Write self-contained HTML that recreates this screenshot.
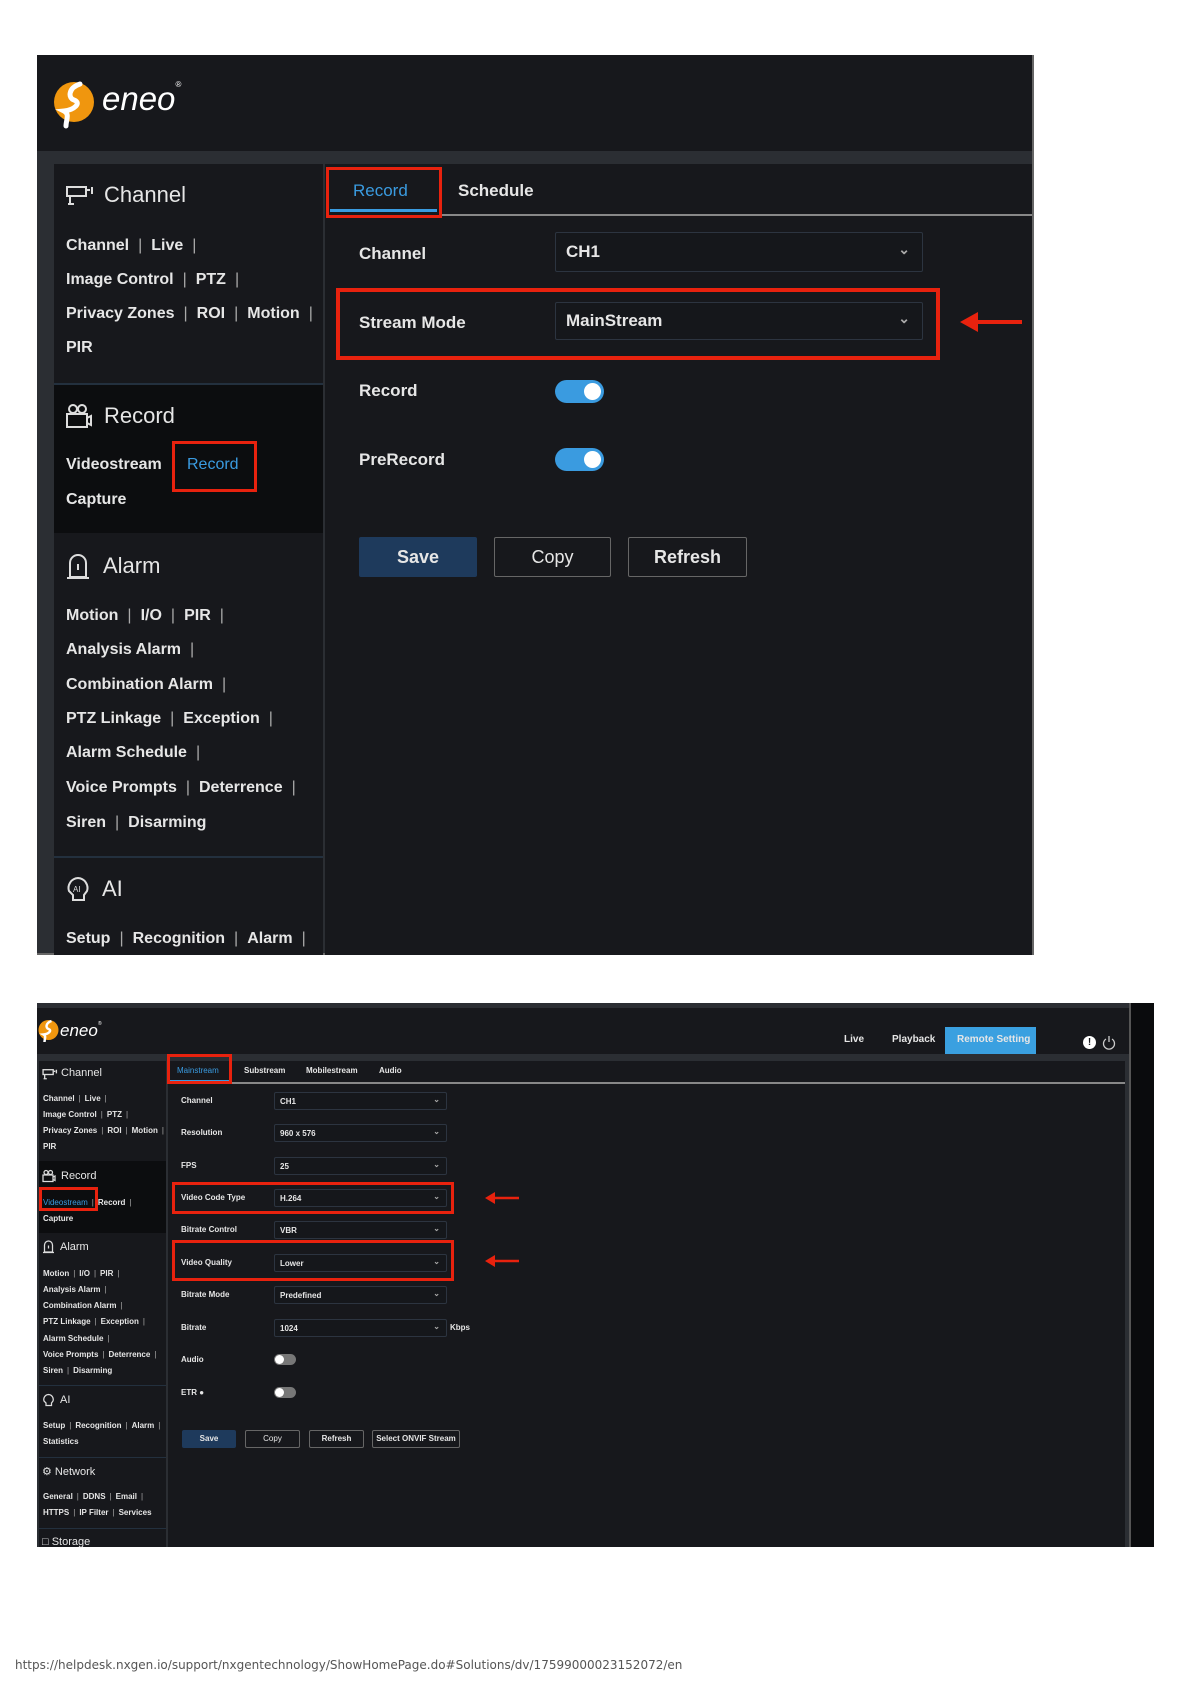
<!DOCTYPE html>
<html><head><meta charset="utf-8"><style>
*{margin:0;padding:0;box-sizing:border-box}
body{width:1192px;height:1684px;background:#fff;position:relative;font-family:"Liberation Sans",sans-serif;overflow:hidden}
.a{position:absolute}
.t{position:absolute;color:#e6e6e6;white-space:nowrap;font-weight:bold}
.sep{color:#aaa;font-weight:normal;margin:0 9px}
.s2 .sep{margin:0 4px}
.red{position:absolute;border:3px solid #e8220e}
.sel{position:absolute;border:1px solid #2c3440;background:#15171b;border-radius:2px;color:#e6e6e6;font-weight:bold}
.btn{position:absolute;border:1px solid #666;color:#e6e6e6;text-align:center;font-weight:bold;border-radius:2px}
</style></head><body>

<!-- PANEL 1 -->
<div class="a" style="left:37px;top:55px;width:997px;height:900px;background:#2b2e33;border-right:2px solid #666;border-bottom:2px solid #666"></div>
<div class="a" style="left:37px;top:55px;width:995px;height:96px;background:#17181c"></div>
<svg class="a" style="left:52px;top:78px" width="46" height="52" viewBox="0 0 46 52"><circle cx="22" cy="24" r="20" fill="#f0960e"/><path d="M28 6 C16 10 16 20 22 22 C30 25 22 32 12 33 C18 36 14 42 14 48" stroke="#fff" stroke-width="5" fill="none" stroke-linecap="round"/></svg>
<div class="a" style="left:102px;top:80px;font:italic 33px 'Liberation Sans',sans-serif;color:#fff;letter-spacing:0px">eneo<span style="font-size:8px;vertical-align:top">®</span></div>
<div class="a" style="left:54px;top:164px;width:269px;height:791px;background:#17181c"></div>
<div class="a" style="left:54px;top:383px;width:269px;height:2px;background:#23303e"></div>
<div class="a" style="left:54px;top:385px;width:269px;height:148px;background:#0c0d0f"></div>
<div class="a" style="left:54px;top:856px;width:269px;height:2px;background:#23303e"></div>
<div class="a" style="left:325px;top:164px;width:707px;height:791px;background:#17181c"></div>

<svg class="a" style="left:65px;top:184px" width="30" height="24" viewBox="0 0 30 24" fill="none" stroke="#ddd" stroke-width="2"><rect x="2" y="3" width="19" height="9"/><path d="M5 12v8M3 20h6M22 6h3M27 3v7"/></svg>
<div class="t" style="left:104px;top:182px;font-size:22px;font-weight:normal">Channel</div>
<div class="t" style="left:66px;top:237px;font-size:16px">Channel<span class="sep">|</span>Live<span class="sep">|</span></div>
<div class="t" style="left:66px;top:271px;font-size:16px">Image Control<span class="sep">|</span>PTZ<span class="sep">|</span></div>
<div class="t" style="left:66px;top:305px;font-size:16px">Privacy Zones<span class="sep">|</span>ROI<span class="sep">|</span>Motion<span class="sep">|</span></div>
<div class="t" style="left:66px;top:339px;font-size:16px">PIR</div>

<svg class="a" style="left:65px;top:402px" width="28" height="28" viewBox="0 0 28 28" fill="none" stroke="#ddd" stroke-width="2"><circle cx="8" cy="7" r="4"/><circle cx="17" cy="7" r="4"/><rect x="2" y="12" width="20" height="13"/><path d="M22 16l4-2v9l-4-2"/></svg>
<div class="t" style="left:104px;top:403px;font-size:22px;font-weight:normal">Record</div>
<div class="t" style="left:66px;top:456px;font-size:16px">Videostream</div>
<div class="t" style="left:187px;top:456px;font-size:16px;color:#3a9be0;font-weight:normal">Record</div>
<div class="red" style="left:172px;top:441px;width:85px;height:51px"></div>
<div class="t" style="left:66px;top:491px;font-size:16px">Capture</div>

<svg class="a" style="left:65px;top:553px" width="26" height="28" viewBox="0 0 26 28" fill="none" stroke="#ddd" stroke-width="2"><path d="M5 24V10a8 8 0 0 1 16 0v14z"/><path d="M2 25h22M13 11v6"/></svg>
<div class="t" style="left:103px;top:553px;font-size:22px;font-weight:normal">Alarm</div>
<div class="t" style="left:66px;top:607px;font-size:16px">Motion<span class="sep">|</span>I/O<span class="sep">|</span>PIR<span class="sep">|</span></div>
<div class="t" style="left:66px;top:641px;font-size:16px">Analysis Alarm<span class="sep">|</span></div>
<div class="t" style="left:66px;top:676px;font-size:16px">Combination Alarm<span class="sep">|</span></div>
<div class="t" style="left:66px;top:710px;font-size:16px">PTZ Linkage<span class="sep">|</span>Exception<span class="sep">|</span></div>
<div class="t" style="left:66px;top:744px;font-size:16px">Alarm Schedule<span class="sep">|</span></div>
<div class="t" style="left:66px;top:779px;font-size:16px">Voice Prompts<span class="sep">|</span>Deterrence<span class="sep">|</span></div>
<div class="t" style="left:66px;top:814px;font-size:16px">Siren<span class="sep">|</span>Disarming</div>

<svg class="a" style="left:65px;top:875px" width="26" height="28" viewBox="0 0 26 28" fill="none" stroke="#ddd" stroke-width="2"><path d="M13 3a10 10 0 0 1 9 13l-3 4v5H8v-5l-4-4A10 10 0 0 1 13 3z"/><text x="8" y="17" font-size="8" fill="#ddd" stroke="none" font-family="Liberation Sans">AI</text></svg>
<div class="t" style="left:102px;top:876px;font-size:22px;font-weight:normal">AI</div>
<div class="t" style="left:66px;top:930px;font-size:16px">Setup<span class="sep">|</span>Recognition<span class="sep">|</span>Alarm<span class="sep">|</span></div>

<!-- main -->
<div class="a" style="left:442px;top:214px;width:590px;height:2px;background:#888"></div>
<div class="a" style="left:330px;top:209px;width:107px;height:3px;background:#3a9be0"></div>
<div class="t" style="left:353px;top:181px;font-size:17px;color:#3a9be0;font-weight:normal">Record</div>
<div class="red" style="left:326px;top:167px;width:116px;height:51px"></div>
<div class="t" style="left:458px;top:181px;font-size:17px">Schedule</div>

<div class="t" style="left:359px;top:244px;font-size:17px">Channel</div>
<div class="sel" style="left:555px;top:232px;width:368px;height:40px;padding:9px 10px;font-size:17px">CH1<span style="position:absolute;right:12px;top:8px;font-size:14px;color:#aaa">&#8964;</span></div>
<div class="t" style="left:359px;top:313px;font-size:17px">Stream Mode</div>
<div class="sel" style="left:555px;top:302px;width:368px;height:38px;padding:8px 10px;font-size:17px">MainStream<span style="position:absolute;right:12px;top:7px;font-size:14px;color:#aaa">&#8964;</span></div>
<div class="red" style="left:336px;top:288px;width:604px;height:72px;border-width:4px"></div>
<svg class="a" style="left:958px;top:310px" width="66" height="24" viewBox="0 0 66 24"><path d="M64 12H14" stroke="#e8220e" stroke-width="4"/><path d="M2 12L20 2v20z" fill="#e8220e"/></svg>

<div class="t" style="left:359px;top:381px;font-size:17px">Record</div>
<div class="a" style="left:555px;top:380px;width:49px;height:23px;border-radius:12px;background:#3a9be0"><div class="a" style="right:3px;top:3px;width:17px;height:17px;border-radius:50%;background:#fff"></div></div>
<div class="t" style="left:359px;top:450px;font-size:17px">PreRecord</div>
<div class="a" style="left:555px;top:448px;width:49px;height:23px;border-radius:12px;background:#3a9be0"><div class="a" style="right:3px;top:3px;width:17px;height:17px;border-radius:50%;background:#fff"></div></div>

<div class="btn" style="left:359px;top:537px;width:118px;height:40px;background:#1e3a5c;border-color:#1e3a5c;font-size:18px;line-height:38px">Save</div>
<div class="btn" style="left:494px;top:537px;width:117px;height:40px;font-size:18px;line-height:38px;font-weight:normal">Copy</div>
<div class="btn" style="left:628px;top:537px;width:119px;height:40px;font-size:18px;line-height:38px">Refresh</div>

<!-- PANEL 2 -->
<div class="s2">
<div class="a" style="left:37px;top:1003px;width:1092px;height:544px;background:#2b2e33"></div>
<div class="a" style="left:1129px;top:1003px;width:25px;height:544px;background:#0a0b0d;border-left:2px solid #555"></div>
<div class="a" style="left:37px;top:1008px;width:1092px;height:46px;background:#17181c"></div>
<svg class="a" style="left:37px;top:1018px" width="24" height="26" viewBox="0 0 46 52"><circle cx="22" cy="24" r="20" fill="#f0960e"/><path d="M28 6 C16 10 16 20 22 22 C30 25 22 32 12 33 C18 36 14 42 14 48" stroke="#fff" stroke-width="5" fill="none"/></svg>
<div class="a" style="left:60px;top:1021px;font:italic 17px 'Liberation Sans',sans-serif;color:#fff">eneo<span style="font-size:5px;vertical-align:top">®</span></div>
<div class="t" style="left:844px;top:1034px;font-size:10px">Live</div>
<div class="t" style="left:892px;top:1034px;font-size:10px">Playback</div>
<div class="a" style="left:945px;top:1027px;width:91px;height:27px;background:#3aa0e0"></div>
<div class="t" style="left:957px;top:1034px;font-size:10px">Remote Setting</div>
<div class="a" style="left:1083px;top:1036px;width:13px;height:13px;border-radius:50%;background:#fff;color:#17181c;font:bold 10px 'Liberation Sans';text-align:center;line-height:13px">!</div>
<svg class="a" style="left:1102px;top:1035px" width="14" height="15" viewBox="0 0 14 15" fill="none" stroke="#ccc" stroke-width="1.3"><path d="M4 4a5.5 5.5 0 1 0 6 0M7 1v6"/></svg>

<div class="a" style="left:39px;top:1061px;width:127px;height:486px;background:#17181c"></div>
<div class="a" style="left:39px;top:1161px;width:127px;height:72px;background:#0c0d0f"></div>
<div class="a" style="left:39px;top:1385px;width:127px;height:1px;background:#23303e"></div>
<div class="a" style="left:39px;top:1457px;width:127px;height:1px;background:#23303e"></div>
<div class="a" style="left:39px;top:1528px;width:127px;height:1px;background:#23303e"></div>
<div class="a" style="left:168px;top:1061px;width:957px;height:486px;background:#17181c"></div>

<svg class="a" style="left:42px;top:1068px" width="16" height="13" viewBox="0 0 30 24" fill="none" stroke="#ddd" stroke-width="2.5"><rect x="2" y="3" width="19" height="9"/><path d="M5 12v8M3 20h6M22 6h3M27 3v7"/></svg>
<div class="t" style="left:61px;top:1067px;font-size:11px;font-weight:normal">Channel</div>
<div class="t" style="left:43px;top:1094px;font-size:8px">Channel<span class="sep">|</span>Live<span class="sep">|</span></div>
<div class="t" style="left:43px;top:1110px;font-size:8px">Image Control<span class="sep">|</span>PTZ<span class="sep">|</span></div>
<div class="t" style="left:43px;top:1126px;font-size:8px">Privacy Zones<span class="sep">|</span>ROI<span class="sep">|</span>Motion<span class="sep">|</span></div>
<div class="t" style="left:43px;top:1142px;font-size:8px">PIR</div>
<svg class="a" style="left:42px;top:1169px" width="14" height="14" viewBox="0 0 28 28" fill="none" stroke="#ddd" stroke-width="2.5"><circle cx="8" cy="7" r="4"/><circle cx="17" cy="7" r="4"/><rect x="2" y="12" width="20" height="13"/><path d="M22 16l4-2v9l-4-2"/></svg>
<div class="t" style="left:61px;top:1170px;font-size:11px;font-weight:normal">Record</div>
<div class="t" style="left:43px;top:1198px;font-size:8px"><span style="color:#3a9be0;font-weight:normal">Videostream</span><span class="sep">|</span>Record<span class="sep">|</span></div>
<div class="red" style="left:39px;top:1187px;width:59px;height:24px"></div>
<div class="t" style="left:43px;top:1214px;font-size:8px">Capture</div>
<svg class="a" style="left:42px;top:1240px" width="13" height="14" viewBox="0 0 26 28" fill="none" stroke="#ddd" stroke-width="2.5"><path d="M5 24V10a8 8 0 0 1 16 0v14z"/><path d="M2 25h22M13 11v6"/></svg>
<div class="t" style="left:60px;top:1241px;font-size:11px;font-weight:normal">Alarm</div>
<div class="t" style="left:43px;top:1269px;font-size:8px">Motion<span class="sep">|</span>I/O<span class="sep">|</span>PIR<span class="sep">|</span></div>
<div class="t" style="left:43px;top:1285px;font-size:8px">Analysis Alarm<span class="sep">|</span></div>
<div class="t" style="left:43px;top:1301px;font-size:8px">Combination Alarm<span class="sep">|</span></div>
<div class="t" style="left:43px;top:1317px;font-size:8px">PTZ Linkage<span class="sep">|</span>Exception<span class="sep">|</span></div>
<div class="t" style="left:43px;top:1334px;font-size:8px">Alarm Schedule<span class="sep">|</span></div>
<div class="t" style="left:43px;top:1350px;font-size:8px">Voice Prompts<span class="sep">|</span>Deterrence<span class="sep">|</span></div>
<div class="t" style="left:43px;top:1366px;font-size:8px">Siren<span class="sep">|</span>Disarming</div>
<svg class="a" style="left:42px;top:1393px" width="13" height="14" viewBox="0 0 26 28" fill="none" stroke="#ddd" stroke-width="2.5"><path d="M13 3a10 10 0 0 1 9 13l-3 4v5H8v-5l-4-4A10 10 0 0 1 13 3z"/></svg>
<div class="t" style="left:60px;top:1394px;font-size:11px;font-weight:normal">AI</div>
<div class="t" style="left:43px;top:1421px;font-size:8px">Setup<span class="sep">|</span>Recognition<span class="sep">|</span>Alarm<span class="sep">|</span></div>
<div class="t" style="left:43px;top:1437px;font-size:8px">Statistics</div>
<div class="t" style="left:42px;top:1465px;font-size:11px;font-weight:normal">&#9881; Network</div>
<div class="t" style="left:43px;top:1492px;font-size:8px">General<span class="sep">|</span>DDNS<span class="sep">|</span>Email<span class="sep">|</span></div>
<div class="t" style="left:43px;top:1508px;font-size:8px">HTTPS<span class="sep">|</span>IP Filter<span class="sep">|</span>Services</div>
<div class="t" style="left:42px;top:1536px;font-size:11px;font-weight:normal">&#9633; Storage</div>

<div class="a" style="left:232px;top:1082px;width:893px;height:2px;background:#888"></div>
<div class="a" style="left:169px;top:1080px;width:62px;height:2px;background:#3a9be0"></div>
<div class="red" style="left:167px;top:1054px;width:65px;height:30px"></div>
<div class="t" style="left:177px;top:1066px;font-size:8px;color:#3a9be0;font-weight:normal">Mainstream</div>
<div class="t" style="left:244px;top:1066px;font-size:8px">Substream</div>
<div class="t" style="left:306px;top:1066px;font-size:8px">Mobilestream</div>
<div class="t" style="left:379px;top:1066px;font-size:8px">Audio</div>

<div class="t" style="left:181px;top:1096px;font-size:8px">Channel</div>
<div class="sel" style="left:274px;top:1092px;width:173px;height:18px;font-size:8px;padding:4px 5px">CH1<span style="position:absolute;right:6px;top:2px;color:#aaa">&#8964;</span></div>
<div class="t" style="left:181px;top:1128px;font-size:8px">Resolution</div>
<div class="sel" style="left:274px;top:1124px;width:173px;height:18px;font-size:8px;padding:4px 5px">960 x 576<span style="position:absolute;right:6px;top:2px;color:#aaa">&#8964;</span></div>
<div class="t" style="left:181px;top:1161px;font-size:8px">FPS</div>
<div class="sel" style="left:274px;top:1157px;width:173px;height:18px;font-size:8px;padding:4px 5px">25<span style="position:absolute;right:6px;top:2px;color:#aaa">&#8964;</span></div>
<div class="t" style="left:181px;top:1193px;font-size:8px">Video Code Type</div>
<div class="sel" style="left:274px;top:1189px;width:173px;height:18px;font-size:8px;padding:4px 5px">H.264<span style="position:absolute;right:6px;top:2px;color:#aaa">&#8964;</span></div>
<div class="red" style="left:172px;top:1182px;width:282px;height:32px"></div>
<div class="t" style="left:181px;top:1225px;font-size:8px">Bitrate Control</div>
<div class="sel" style="left:274px;top:1221px;width:173px;height:18px;font-size:8px;padding:4px 5px">VBR<span style="position:absolute;right:6px;top:2px;color:#aaa">&#8964;</span></div>
<div class="t" style="left:181px;top:1258px;font-size:8px">Video Quality</div>
<div class="sel" style="left:274px;top:1254px;width:173px;height:18px;font-size:8px;padding:4px 5px">Lower<span style="position:absolute;right:6px;top:2px;color:#aaa">&#8964;</span></div>
<div class="red" style="left:172px;top:1240px;width:282px;height:41px"></div>
<div class="t" style="left:181px;top:1290px;font-size:8px">Bitrate Mode</div>
<div class="sel" style="left:274px;top:1286px;width:173px;height:18px;font-size:8px;padding:4px 5px">Predefined<span style="position:absolute;right:6px;top:2px;color:#aaa">&#8964;</span></div>
<div class="t" style="left:181px;top:1323px;font-size:8px">Bitrate</div>
<div class="sel" style="left:274px;top:1319px;width:173px;height:18px;font-size:8px;padding:4px 5px">1024<span style="position:absolute;right:6px;top:2px;color:#aaa">&#8964;</span></div>
<div class="t" style="left:450px;top:1323px;font-size:8px">Kbps</div>
<div class="t" style="left:181px;top:1355px;font-size:8px">Audio</div>
<div class="a" style="left:274px;top:1354px;width:22px;height:11px;border-radius:6px;background:#777"><div class="a" style="left:1px;top:1px;width:9px;height:9px;border-radius:50%;background:#fff"></div></div>
<div class="t" style="left:181px;top:1388px;font-size:8px">ETR &#9679;</div>
<div class="a" style="left:274px;top:1387px;width:22px;height:11px;border-radius:6px;background:#777"><div class="a" style="left:1px;top:1px;width:9px;height:9px;border-radius:50%;background:#fff"></div></div>
<svg class="a" style="left:484px;top:1192px" width="36" height="12" viewBox="0 0 36 12"><path d="M35 6H8" stroke="#e8220e" stroke-width="2.5"/><path d="M1 6L11 0v12z" fill="#e8220e"/></svg>
<svg class="a" style="left:484px;top:1255px" width="36" height="12" viewBox="0 0 36 12"><path d="M35 6H8" stroke="#e8220e" stroke-width="2.5"/><path d="M1 6L11 0v12z" fill="#e8220e"/></svg>

<div class="btn" style="left:182px;top:1430px;width:54px;height:18px;background:#1e3a5c;border-color:#1e3a5c;font-size:8px;line-height:16px">Save</div>
<div class="btn" style="left:245px;top:1430px;width:55px;height:18px;font-size:8px;line-height:16px;font-weight:normal">Copy</div>
<div class="btn" style="left:309px;top:1430px;width:55px;height:18px;font-size:8px;line-height:16px">Refresh</div>
<div class="btn" style="left:372px;top:1430px;width:88px;height:18px;font-size:8px;line-height:16px">Select ONVIF Stream</div>
</div>

<div class="a" style="left:15px;top:1658px;font:12px 'DejaVu Sans',sans-serif;color:#555;white-space:nowrap">https://helpdesk.nxgen.io/support/nxgentechnology/ShowHomePage.do#Solutions/dv/17599000023152072/en</div>
</body></html>
